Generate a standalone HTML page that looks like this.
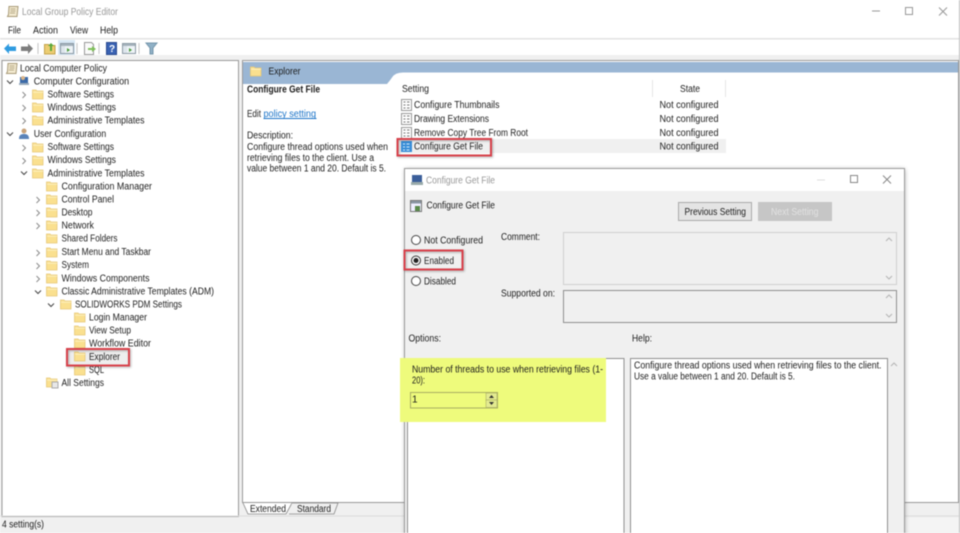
<!DOCTYPE html>
<html><head><meta charset="utf-8"><title>Local Group Policy Editor</title>
<style>
html,body{margin:0;padding:0;background:#fff;width:960px;height:533px;overflow:hidden}
svg{display:block;filter:blur(.4px)}
text{font-family:"Liberation Sans",sans-serif;font-size:10px;fill:#1c1c1c}
.g{fill:#999}
.chev{fill:none;stroke:#8a8a8a;stroke-width:1}
.ar{fill:none;stroke:#b4b4b4;stroke-width:1}
.red{fill:none;stroke:#d8404a;stroke-width:2;filter:drop-shadow(1px 1px 1px rgba(0,0,0,.3))}
</style></head><body>
<svg width="960" height="533" viewBox="0 0 960 533" xmlns="http://www.w3.org/2000/svg">
<defs>
<filter id="sh" x="-5%" y="-5%" width="110%" height="110%"><feGaussianBlur stdDeviation="2.5"/></filter>
<symbol id="f" width="12" height="11" viewBox="0 0 12 11" overflow="visible"><path d="M.5 1h3.500l1 1h6v8H.5z" fill="#fae08f" stroke="#e6c878" stroke-width=".8"/><path d="M1 3.200h10" stroke="#fdf0c0"/></symbol>
<symbol id="r" width="6" height="10" viewBox="0 0 6 10"><path d="M1.500 2l3 3-3 3" class="chev"/></symbol>
<symbol id="d" width="10" height="6" viewBox="0 0 10 6"><path d="M2 1.500l3 3 3-3" fill="none" stroke="#444"/></symbol>
<symbol id="doc" width="11" height="12" viewBox="0 0 11 12"><path d="M.5.5h10v11H.5z" fill="#fff" stroke="#999"/><path d="M2.500 3h2M2.500 6h2M2.500 9h2M6 3h2.500M6 6h2.500M6 9h2.500" stroke="#777"/></symbol>
<symbol id="pol" width="13" height="13" viewBox="0 0 13 13"><path d="M3 1.500h9l-1 10H1.500l1-2z" fill="#f3ead0" stroke="#a89a78"/><path d="M4.500 4h5M4.500 6h5M4 8h5" stroke="#b7aa88"/></symbol>
<symbol id="win" width="14" height="13" viewBox="0 0 14 13"><path d="M.5 1.500h13v10H.5z" fill="#eef3f7" stroke="#8a98a3"/><path d="M1 2h12v2H1z" fill="#a6b3bd"/><path d="M1 4h4v7H1z" fill="#dde5ec"/><path d="M7 6v4l3-2z" fill="#4a9a3a"/></symbol>
</defs>

<rect width="960" height="533" fill="#fff"/>
<rect x="959" y="0" width="1" height="533" fill="#bbb"/>
<!-- title bar -->
<use href="#pol" x="6" y="5"/>
<text class="g" x="22" y="15" textLength="96" lengthAdjust="spacingAndGlyphs">Local Group Policy Editor</text>
<path d="M872 11h8" stroke="#999"/>
<rect x="905.500" y="7.500" width="7" height="7" fill="none" stroke="#999"/>
<path d="M939 7.500l8 8M947 7.500l-8 8" stroke="#999"/>
<!-- menu -->
<text x="8" y="33.500" textLength="13" lengthAdjust="spacingAndGlyphs">File</text>
<text x="33" y="33.500" textLength="25" lengthAdjust="spacingAndGlyphs">Action</text>
<text x="70" y="33.500" textLength="18" lengthAdjust="spacingAndGlyphs">View</text>
<text x="100" y="33.500" textLength="18" lengthAdjust="spacingAndGlyphs">Help</text>
<rect x="0" y="38" width="959" height="1.500" fill="#e2e2e2"/>
<!-- toolbar -->
<path d="M4 48.500l5-5v3h7v4.500H9v3z" fill="#2f9be0"/>
<path d="M33 48.500l-5-5v3h-7v4.500h7v3z" fill="#7d7d7d"/>
<path d="M38 43v11M77 43v11M99 43v11M139 43v11" stroke="#c4c4c4"/>
<path d="M44.500 44.500h4l1 1h5.500v8.500H44.500z" fill="#eccd72" stroke="#c4a24a"/>
<path d="M50 51v-5h-2l3-3 3 3h-2v5z" fill="#5aa83a"/>
<rect x="58" y="40" width="17" height="15" fill="#d8e8f5"/>
<use href="#win" x="60" y="42"/>
<path d="M84.500 42.500h7l2 2v10h-9z" fill="#fafafa" stroke="#999"/>
<path d="M88 48h4v-2l4 3-4 3v-2h-4z" fill="#7fbf5a"/>
<rect x="106.500" y="42.500" width="10" height="12" fill="#3a63b4" stroke="#2a4a90"/>
<text x="109" y="52" style="font-size:10px;font-weight:bold;fill:#fff">?</text>
<use href="#win" x="122" y="42"/>
<path d="M146 43h11l-4 5v6h-3v-6z" fill="#8fb0c6" stroke="#7596ab"/>
<!-- gray band -->
<rect x="0" y="55" width="959" height="478" fill="#f0f0f0"/>
<!-- tree pane -->
<rect x="2" y="60.500" width="236.500" height="456" fill="#fff" stroke="#999"/>
<!-- tree rows -->
<use href="#pol" x="5" y="62"/>
<text x="20" y="71.500" textLength="87" lengthAdjust="spacingAndGlyphs">Local Computer Policy</text>
<use href="#d" x="5" y="79"/>
<path d="M20 77h8v6h-8z" fill="#3b6aa8"/><path d="M19 83h10v2H19z" fill="#9ab"/><circle cx="23" cy="78" r="2" fill="#d9b58a"/>
<text x="33.700" y="84.500" textLength="95.500" lengthAdjust="spacingAndGlyphs">Computer Configuration</text>
<use href="#r" x="21" y="90"/><use href="#f" x="32" y="89"/>
<text x="47.500" y="97.700" textLength="66.500" lengthAdjust="spacingAndGlyphs">Software Settings</text>
<use href="#r" x="21" y="103"/><use href="#f" x="32" y="102"/>
<text x="47.500" y="110.700" textLength="68.500" lengthAdjust="spacingAndGlyphs">Windows Settings</text>
<use href="#r" x="21" y="116"/><use href="#f" x="32" y="115"/>
<text x="47.500" y="123.700" textLength="97" lengthAdjust="spacingAndGlyphs">Administrative Templates</text>
<use href="#d" x="5" y="131"/>
<circle cx="24" cy="131" r="2.500" fill="#c9a37a"/><path d="M19 139c0-4 2-5 5-5s5 1 5 5z" fill="#5a83b8"/>
<text x="33.700" y="137" textLength="72.500" lengthAdjust="spacingAndGlyphs">User Configuration</text>
<use href="#r" x="21" y="143"/><use href="#f" x="32" y="142"/>
<text x="47.500" y="150.200" textLength="66.500" lengthAdjust="spacingAndGlyphs">Software Settings</text>
<use href="#r" x="21" y="156"/><use href="#f" x="32" y="155"/>
<text x="47.500" y="163.200" textLength="68.500" lengthAdjust="spacingAndGlyphs">Windows Settings</text>
<use href="#d" x="19" y="170"/><use href="#f" x="32" y="168"/>
<text x="47.500" y="176.500" textLength="97" lengthAdjust="spacingAndGlyphs">Administrative Templates</text>
<use href="#f" x="46" y="181"/>
<text x="61.500" y="189.500" textLength="90.500" lengthAdjust="spacingAndGlyphs">Configuration Manager</text>
<use href="#r" x="35" y="195"/><use href="#f" x="46" y="194"/>
<text x="61.500" y="202.700" textLength="52.500" lengthAdjust="spacingAndGlyphs">Control Panel</text>
<use href="#r" x="35" y="208"/><use href="#f" x="46" y="207"/>
<text x="61.500" y="215.700" textLength="31" lengthAdjust="spacingAndGlyphs">Desktop</text>
<use href="#r" x="35" y="221"/><use href="#f" x="46" y="220"/>
<text x="61.500" y="228.700" textLength="32.500" lengthAdjust="spacingAndGlyphs">Network</text>
<use href="#f" x="46" y="233"/>
<text x="61.500" y="241.700" textLength="56" lengthAdjust="spacingAndGlyphs">Shared Folders</text>
<use href="#r" x="35" y="248"/><use href="#f" x="46" y="247"/>
<text x="61.500" y="255.200" textLength="89.500" lengthAdjust="spacingAndGlyphs">Start Menu and Taskbar</text>
<use href="#r" x="35" y="261"/><use href="#f" x="46" y="260"/>
<text x="61.500" y="268.200" textLength="27.500" lengthAdjust="spacingAndGlyphs">System</text>
<use href="#r" x="35" y="274"/><use href="#f" x="46" y="273"/>
<text x="61.500" y="281.300" textLength="88" lengthAdjust="spacingAndGlyphs">Windows Components</text>
<use href="#d" x="33" y="289"/><use href="#f" x="46" y="286"/>
<text x="61.500" y="294.300" textLength="152.500" lengthAdjust="spacingAndGlyphs">Classic Administrative Templates (ADM)</text>
<use href="#d" x="46" y="302"/><use href="#f" x="60" y="299"/>
<text x="75" y="307.500" textLength="107" lengthAdjust="spacingAndGlyphs">SOLIDWORKS PDM Settings</text>
<use href="#f" x="74" y="312"/>
<text x="89" y="320.700" textLength="58" lengthAdjust="spacingAndGlyphs">Login Manager</text>
<use href="#f" x="74" y="325"/>
<text x="89" y="333.700" textLength="42" lengthAdjust="spacingAndGlyphs">View Setup</text>
<use href="#f" x="74" y="338"/>
<text x="89" y="346.700" textLength="62" lengthAdjust="spacingAndGlyphs">Workflow Editor</text>
<rect x="68" y="350" width="61" height="14" fill="#eee"/>
<use href="#f" x="74" y="351"/>
<text x="89" y="360" textLength="31" lengthAdjust="spacingAndGlyphs">Explorer</text>
<use href="#f" x="74" y="365"/>
<text x="89" y="373" textLength="15" lengthAdjust="spacingAndGlyphs">SQL</text>
<use href="#f" x="46" y="377"/><rect x="52" y="382" width="6" height="6" fill="#e8e8e8" stroke="#aaa"/>
<text x="61.500" y="386" textLength="42.500" lengthAdjust="spacingAndGlyphs">All Settings</text>
<rect x="67" y="349" width="62" height="16.500" class="red"/>

<!-- right pane -->
<rect x="242.500" y="60.500" width="716" height="442" fill="#fff" stroke="#999"/>
<path d="M243 62h715v10.500H403q-8 0-11 5-2 3-5 6.500H243z" fill="#9ab6d4"/>
<use href="#f" x="250" y="66"/>
<text x="268.500" y="74.500" textLength="32" lengthAdjust="spacingAndGlyphs">Explorer</text>
<text x="247" y="92.500" textLength="73" lengthAdjust="spacingAndGlyphs" style="font-weight:bold">Configure Get File</text>
<text x="247" y="117" textLength="14" lengthAdjust="spacingAndGlyphs">Edit</text>
<text x="263.500" y="117" textLength="52.500" lengthAdjust="spacingAndGlyphs" style="fill:#1a73c8">policy setting</text>
<path d="M263.500 118.500h53" stroke="#1a73c8"/>
<text x="247" y="138.500" textLength="46" lengthAdjust="spacingAndGlyphs">Description:</text>
<text x="247" y="150" textLength="141" lengthAdjust="spacingAndGlyphs">Configure thread options used when</text>
<text x="247" y="161" textLength="127" lengthAdjust="spacingAndGlyphs">retrieving files to the client. Use a</text>
<text x="247" y="171.500" textLength="139" lengthAdjust="spacingAndGlyphs">value between 1 and 20. Default is 5.</text>
<!-- list -->
<text x="402" y="92" textLength="27" lengthAdjust="spacingAndGlyphs">Setting</text>
<text x="680" y="92" textLength="20" lengthAdjust="spacingAndGlyphs">State</text>
<path d="M652.500 80v17M725.500 80v17" stroke="#e5e5e5"/>
<rect x="398" y="139" width="328" height="14" fill="#f0f0f0"/>
<use href="#doc" x="401" y="99"/><use href="#doc" x="401" y="113"/><use href="#doc" x="401" y="127"/>
<rect x="401" y="141" width="11" height="11" fill="#3a8ed8"/><path d="M403 144h2M403 147h2M403 150h2M406.500 144h3M406.500 147h3M406.500 150h3" stroke="#d5ebfa"/>
<text x="414" y="108" textLength="85.500" lengthAdjust="spacingAndGlyphs">Configure Thumbnails</text>
<text x="414" y="122" textLength="75" lengthAdjust="spacingAndGlyphs">Drawing Extensions</text>
<text x="414" y="136" textLength="114" lengthAdjust="spacingAndGlyphs">Remove Copy Tree From Root</text>
<text x="414" y="149.700" textLength="69" lengthAdjust="spacingAndGlyphs">Configure Get File</text>
<text x="659.500" y="108" textLength="59" lengthAdjust="spacingAndGlyphs">Not configured</text>
<text x="659.500" y="122" textLength="59" lengthAdjust="spacingAndGlyphs">Not configured</text>
<text x="659.500" y="136" textLength="59" lengthAdjust="spacingAndGlyphs">Not configured</text>
<text x="659.500" y="149.700" textLength="59" lengthAdjust="spacingAndGlyphs">Not configured</text>
<rect x="397.500" y="139" width="93.500" height="16.500" class="red"/>
<!-- tabs -->
<rect x="243" y="503" width="715" height="12" fill="#f0f0f0"/>
<path d="M243 503l5 11h38l6-11z" fill="#fff"/>
<path d="M243 503l5 11h38l6-11" fill="none" stroke="#888" stroke-width=".8"/>
<path d="M292 503h46l-4 11h-45" fill="#f0f0f0" stroke="#888" stroke-width=".8"/>
<text x="250" y="511.800" textLength="36" lengthAdjust="spacingAndGlyphs">Extended</text>
<text x="297" y="511.800" textLength="34" lengthAdjust="spacingAndGlyphs">Standard</text>
<rect x="0" y="515.500" width="959" height="1" fill="#dcdcdc"/>
<text x="2" y="527.500" textLength="42" lengthAdjust="spacingAndGlyphs">4 setting(s)</text>
<rect x="905" y="518" width="54" height="14" fill="#f4f4f4"/>

<!-- dialog -->
<rect x="405" y="169" width="500" height="370" fill="#000" opacity=".3" filter="url(#sh)"/>
<rect x="404.500" y="168.500" width="500" height="370" fill="#f0f0f0" stroke="#9a9a9a"/>
<rect x="405" y="169" width="499" height="22" fill="#fff"/>
<rect x="412" y="175" width="10" height="7" fill="#3b5f9a"/><path d="M411 182h12v3h-12z" fill="#9aa"/>
<text class="g" x="426" y="183.500" textLength="69" lengthAdjust="spacingAndGlyphs">Configure Get File</text>
<path d="M817 180h8" stroke="#ddd"/>
<rect x="850.500" y="175.500" width="7" height="7" fill="none" stroke="#888"/>
<path d="M883 175.500l8 8M891 175.500l-8 8" stroke="#888"/>
<rect x="410.500" y="200.500" width="11" height="11" fill="#eef" stroke="#777"/><rect x="411" y="201" width="10" height="2.500" fill="#8a97a3"/><rect x="415" y="206" width="5" height="5" fill="#5a8a4a"/>
<text x="426.500" y="208.500" textLength="68.500" lengthAdjust="spacingAndGlyphs">Configure Get File</text>
<rect x="678.500" y="202.500" width="73" height="18" fill="#e4e4e4" stroke="#aaa"/>
<text x="684.500" y="215" textLength="61.500" lengthAdjust="spacingAndGlyphs">Previous Setting</text>
<rect x="758" y="202" width="74" height="19" fill="#c6c6c6"/>
<text x="771" y="215" textLength="47.500" lengthAdjust="spacingAndGlyphs" style="fill:#e2e2e2">Next Setting</text>
<circle cx="416" cy="240" r="4.500" fill="#fff" stroke="#444"/>
<text x="424" y="243.500" textLength="59" lengthAdjust="spacingAndGlyphs">Not Configured</text>
<circle cx="416" cy="260.500" r="4.500" fill="#fff" stroke="#333"/><circle cx="416" cy="260.500" r="2.500" fill="#222"/>
<text x="424" y="264" textLength="30" lengthAdjust="spacingAndGlyphs">Enabled</text>
<circle cx="416" cy="281" r="4.500" fill="#fff" stroke="#444"/>
<text x="424" y="284.500" textLength="32" lengthAdjust="spacingAndGlyphs">Disabled</text>
<rect x="404.500" y="250.500" width="58" height="19" class="red"/>
<text x="501" y="240" textLength="39" lengthAdjust="spacingAndGlyphs">Comment:</text>
<text x="501" y="296.500" textLength="54" lengthAdjust="spacingAndGlyphs">Supported on:</text>
<rect x="563.500" y="232.500" width="333" height="52" fill="#f0f0f0" stroke="#d0d0d0"/>
<path d="M886 241l3-3 3 3M886 276l3 3 3-3" class="ar"/>
<rect x="563.500" y="290.500" width="333" height="32" fill="#f0f0f0" stroke="#8f8f8f"/>
<path d="M886 298l3-3 3 3M886 314l3 3 3-3" class="ar"/>
<text x="408.500" y="341.500" textLength="32.500" lengthAdjust="spacingAndGlyphs">Options:</text>
<text x="632" y="341.500" textLength="20" lengthAdjust="spacingAndGlyphs">Help:</text>
<!-- options box -->
<rect x="407.500" y="358.500" width="216.500" height="180" fill="#fff" stroke="#8f8f8f"/>
<rect x="630.500" y="358.500" width="257" height="180" fill="#fff" stroke="#8f8f8f"/>
<path d="M891 366l3-3 3 3" class="ar"/>
<rect x="400" y="358" width="206" height="64" fill="#eefb7c"/>
<text x="412" y="372.500" textLength="191" lengthAdjust="spacingAndGlyphs">Number of threads to use when retrieving files (1-</text>
<text x="412" y="383.500" textLength="13" lengthAdjust="spacingAndGlyphs">20):</text>
<rect x="410.500" y="392.500" width="87" height="15.500" fill="#eefb7c" stroke="#a9ae62"/>
<text x="412" y="402.500">1</text>
<rect x="486" y="393" width="11" height="7" fill="#e4eb90" stroke="#a9ae62" stroke-width=".6"/>
<rect x="486" y="400" width="11" height="7.500" fill="#e4eb90" stroke="#a9ae62" stroke-width=".6"/>
<path d="M489 398l2.500-3 2.500 3zM489 402l2.500 3 2.500-3z" fill="#333"/>
<text x="634" y="368.500" textLength="247.500" lengthAdjust="spacingAndGlyphs">Configure thread options used when retrieving files to the client.</text>
<text x="634" y="379.500" textLength="161" lengthAdjust="spacingAndGlyphs">Use a value between 1 and 20. Default is 5.</text>
</svg>
</body></html>
